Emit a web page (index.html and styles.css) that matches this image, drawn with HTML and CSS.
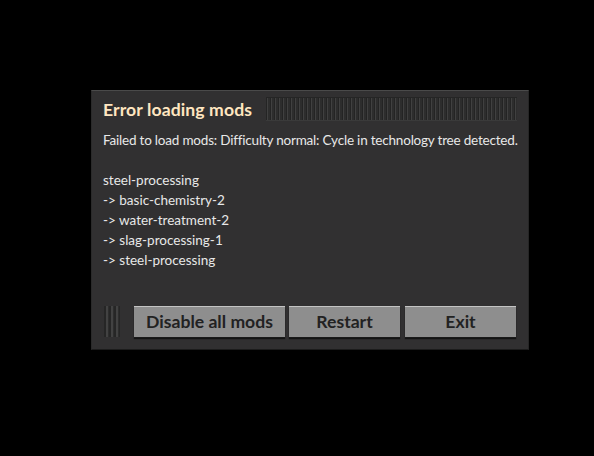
FILE: index.html
```html
<!DOCTYPE html>
<html>
<head>
<meta charset="utf-8">
<link rel="stylesheet" href="styles.css">
</head>
<body>
<div class="frame">
  <div class="titlebar">
    <div class="title">Error loading mods</div>
    <div class="filler"></div>
  </div>
  <div class="content">
    <p class="line message">Failed to load mods: Difficulty normal: Cycle in technology tree detected.</p>
    <p class="line blank">&nbsp;</p>
    <p class="line">steel-processing</p>
    <p class="line">-&gt; basic-chemistry-2</p>
    <p class="line">-&gt; water-treatment-2</p>
    <p class="line">-&gt; slag-processing-1</p>
    <p class="line">-&gt; steel-processing</p>
  </div>
  <div class="buttons">
    <div class="grip"></div>
    <button class="btn btn-wide">Disable all mods</button>
    <button class="btn">Restart</button>
    <button class="btn btn-last">Exit</button>
  </div>
</div>
</body>
</html>
```
FILE: styles.css
```css
html, body {
  margin: 0;
  padding: 0;
  background: #000;
}
body {
  padding: 90px 0 0 91px;
  font-family: "Lato", "Open Sans", sans-serif;
}
.frame {
  width: 438px;
  height: 260px;
  box-sizing: border-box;
  background: #313031;
  border-top: 1px solid #4a4a4a;
  border-left: 1px solid #2a2a2a;
  border-right: 1px solid #262626;
  border-bottom: 1px solid #1c1c1c;
  padding: 6px 11px 0 11px;
  display: flex;
  flex-direction: column;
}
.titlebar {
  display: flex;
  align-items: center;
  height: 24px;
}
.title {
  color: #ffe6c0;
  font-weight: bold;
  font-size: 17.6px;
  letter-spacing: 0.1px;
  white-space: nowrap;
}
.filler {
  flex: 1;
  height: 24px;
  margin-left: 14px;
  background: repeating-linear-gradient(90deg, #242424 0 1px, #404040 1px 2px, #2d2d2d 2px 4px);
  box-shadow: inset 0 1px 0 #252525, inset 0 -1px 0 #3a3a3a;
}
.content {
  margin-top: 9px;
  color: #e8e8e8;
  font-size: 13.5px;
}
.line {
  margin: 0;
  height: 20px;
  line-height: 20px;
  white-space: nowrap;
}
.message {
  letter-spacing: -0.2px;
}
.buttons {
  margin-top: auto;
  margin-bottom: 12px;
  display: flex;
  gap: 4px;
  height: 31px;
}
.grip {
  width: 16px;
  margin-left: 1px;
  margin-right: 10px;
  background: repeating-linear-gradient(90deg, #262626 0 2px, #424242 2px 4px, #2d2d2d 4px 5px);
}
.btn {
  width: 111px;
  height: 31px;
  box-sizing: border-box;
  background: #8e8e8e;
  border: none;
  border-top: 1px solid #c4c4c4;
  box-shadow: 0 1px 0 #1a1a1a, 0 2px 1px #141414;
  color: #222;
  font-family: inherit;
  font-weight: bold;
  font-size: 17.6px;
  padding: 0 0 1px 0;
  cursor: pointer;
}
.btn-wide {
  width: 151px;
}
.btn-last {
  margin-left: 1px;
}
```
